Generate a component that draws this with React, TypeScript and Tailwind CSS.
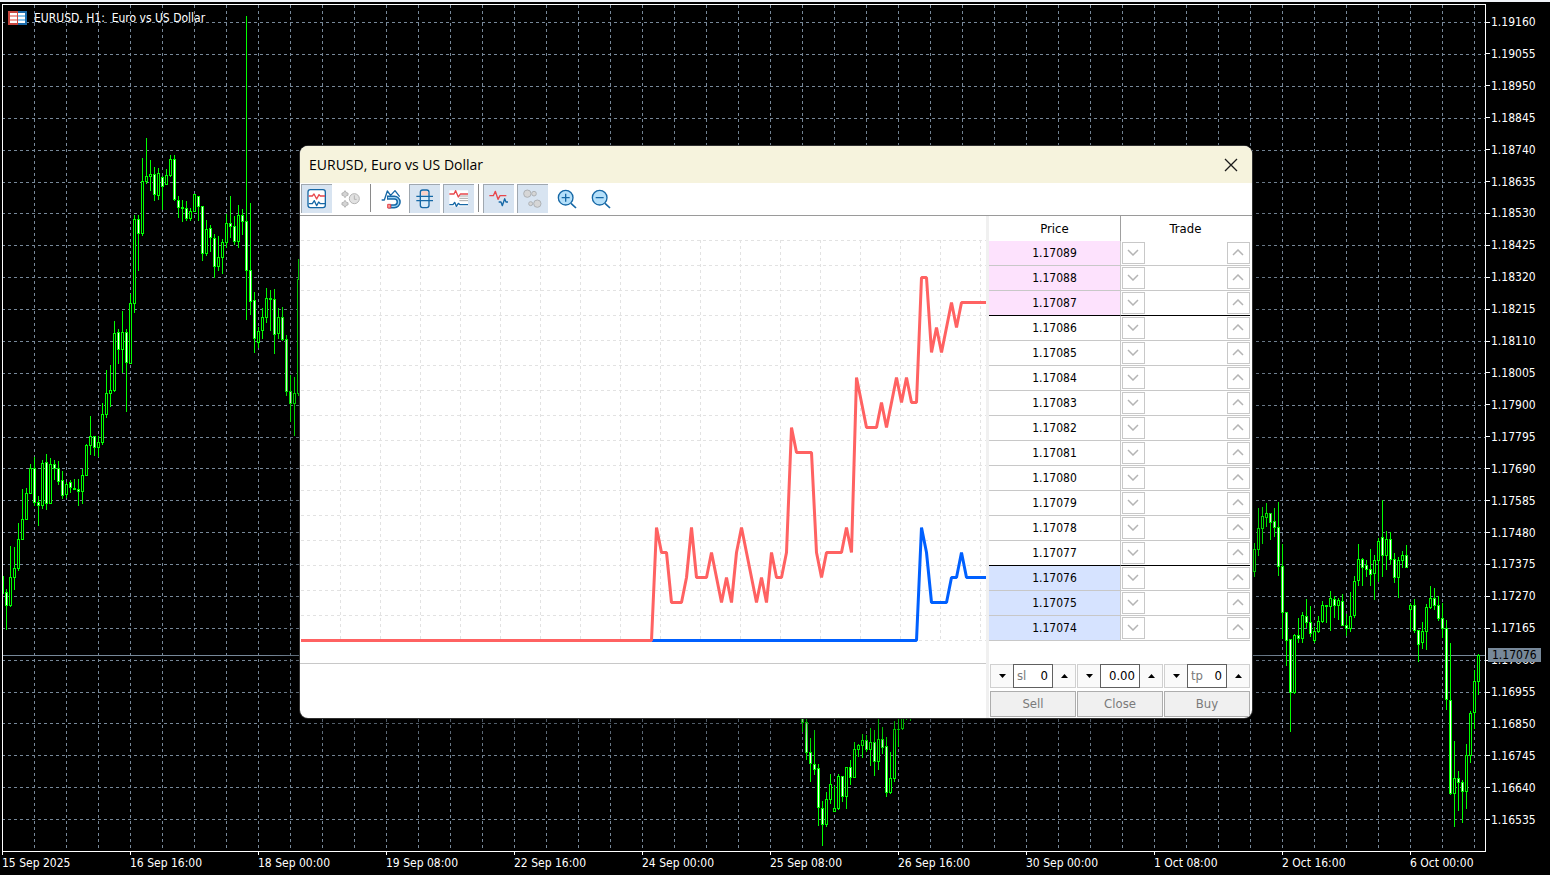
import React, { useState } from 'react';
import clsx from 'clsx';

type Candle = [high: number, top: number, bottom: number, low: number, bearish: 0 | 1];

interface CandleRun {
  start: number;
  candles: Candle[];
}

// Vertical pixel positions; one candle every 4px from the run's start
const candleRuns: CandleRun[] = [
  {
    start: 2,
    candles: [
      [576, 576, 593, 593, 0], [589, 592, 605, 630, 1], [546, 577, 605, 607, 0], [547, 568, 577, 590, 0],
      [523, 539, 568, 571, 0], [489, 519, 539, 539, 0], [488, 493, 519, 519, 0], [464, 468, 493, 493, 0],
      [457, 468, 502, 506, 1], [496, 502, 505, 526, 1], [460, 463, 505, 509, 0], [454, 462, 503, 510, 1],
      [458, 464, 503, 503, 0], [460, 464, 468, 480, 1], [461, 468, 481, 485, 1], [471, 480, 495, 499, 1],
      [482, 484, 494, 498, 0], [480, 482, 487, 493, 1], [479, 488, 489, 489, 0], [479, 489, 491, 506, 1],
      [469, 475, 491, 504, 0], [444, 445, 475, 475, 0], [416, 436, 445, 455, 0], [436, 436, 447, 456, 1],
      [436, 442, 447, 457, 0], [403, 414, 442, 445, 0], [370, 393, 414, 418, 0], [365, 390, 393, 407, 0],
      [321, 333, 390, 392, 0], [329, 332, 349, 364, 1], [311, 332, 349, 373, 0], [329, 332, 362, 412, 1],
      [294, 303, 363, 363, 0], [215, 219, 303, 313, 0], [215, 219, 233, 271, 1], [158, 181, 233, 236, 0],
      [138, 176, 181, 184, 0], [160, 174, 176, 191, 0], [167, 174, 194, 201, 1], [168, 173, 195, 200, 0],
      [176, 177, 186, 210, 1], [169, 175, 184, 184, 0], [155, 159, 175, 177, 0], [155, 159, 199, 201, 1],
      [196, 200, 207, 218, 1], [200, 207, 208, 222, 1], [201, 208, 218, 221, 1], [208, 211, 218, 221, 0],
      [194, 194, 211, 212, 0], [196, 196, 206, 221, 1], [206, 206, 253, 261, 1], [220, 229, 253, 256, 0],
      [225, 228, 237, 252, 1], [234, 238, 266, 278, 1], [236, 257, 266, 271, 0], [239, 242, 257, 274, 0],
      [214, 223, 242, 248, 0], [196, 223, 226, 238, 1], [216, 226, 241, 245, 1], [205, 215, 241, 248, 0],
      [209, 215, 221, 235, 1], [16, 221, 270, 320, 1], [203, 270, 301, 315, 1], [292, 300, 338, 353, 1],
      [327, 331, 342, 348, 0], [308, 317, 330, 339, 0], [288, 298, 317, 323, 0], [290, 298, 299, 331, 1],
      [289, 299, 334, 354, 1], [308, 317, 333, 339, 0], [307, 317, 339, 341, 1], [335, 339, 391, 396, 1],
      [375, 391, 403, 422, 1], [377, 393, 403, 436, 0], [259, 279, 393, 396, 0],
    ],
  },
  {
    start: 802,
    candles: [
      [700, 700, 722, 732, 1], [700, 722, 752, 760, 1], [738, 752, 763, 782, 1], [730, 764, 769, 775, 1],
      [764, 768, 807, 826, 1], [801, 808, 824, 846, 1], [792, 799, 824, 827, 0], [774, 784, 799, 804, 0],
      [786, 808, 811, 811, 0], [774, 776, 808, 810, 0], [776, 776, 796, 802, 1], [767, 767, 796, 809, 0],
      [760, 767, 777, 785, 1], [742, 749, 777, 778, 0], [744, 745, 749, 757, 0], [734, 740, 745, 758, 0],
      [735, 740, 749, 752, 1], [728, 742, 749, 766, 0], [730, 742, 761, 776, 1], [717, 739, 761, 770, 0],
      [727, 739, 747, 754, 1], [737, 746, 792, 797, 1], [752, 778, 792, 794, 0], [721, 729, 778, 782, 0],
      [717, 729, 729, 747, 0], [700, 700, 728, 730, 0], [700, 700, 712, 720, 0], [700, 700, 712, 721, 0],
    ],
  },
  {
    start: 1254,
    candles: [
      [543, 549, 571, 577, 0], [508, 528, 549, 556, 0], [507, 516, 528, 544, 0], [503, 513, 517, 527, 0],
      [513, 513, 522, 540, 1], [508, 521, 527, 537, 1], [502, 527, 566, 576, 1], [544, 566, 612, 639, 1],
      [612, 612, 640, 666, 1], [639, 639, 692, 732, 1], [634, 635, 692, 694, 0], [618, 635, 638, 643, 1],
      [612, 615, 638, 643, 0], [599, 616, 622, 628, 1], [606, 622, 633, 637, 1], [627, 631, 640, 643, 0],
      [616, 621, 631, 633, 0], [601, 605, 621, 623, 0], [605, 605, 606, 623, 0], [591, 598, 606, 631, 0],
      [596, 599, 605, 618, 1], [598, 600, 605, 620, 0], [594, 601, 625, 625, 1], [614, 625, 628, 636, 1],
      [592, 616, 628, 632, 0], [576, 581, 615, 618, 0], [544, 559, 580, 586, 0], [558, 559, 567, 586, 1],
      [560, 565, 569, 577, 1], [549, 569, 574, 586, 1], [555, 560, 573, 600, 0], [538, 541, 560, 582, 0],
      [500, 537, 555, 577, 1], [531, 539, 555, 570, 0], [532, 539, 559, 565, 1], [553, 559, 577, 583, 1],
      [557, 560, 577, 598, 0], [551, 555, 560, 568, 0], [545, 555, 567, 567, 1], [603, 605, 609, 630, 0],
      [599, 605, 630, 633, 1], [630, 630, 644, 662, 1], [622, 631, 642, 649, 0], [604, 607, 631, 650, 0],
      [586, 598, 607, 609, 0], [588, 598, 605, 610, 1], [596, 605, 618, 621, 1], [603, 618, 628, 638, 1],
      [620, 628, 699, 710, 1], [643, 700, 793, 795, 1], [741, 778, 793, 827, 0], [771, 778, 782, 811, 1],
      [780, 782, 791, 823, 1], [744, 755, 791, 809, 0], [711, 713, 755, 763, 0], [670, 681, 712, 729, 0],
      [654, 655, 681, 695, 0],
    ],
  },
];

const gridRows = [
  22, 54, 86, 118, 150, 182, 213, 245, 277, 309, 341, 373, 405, 437, 468, 500, 532, 564, 596, 628, 660, 692, 723,
  755, 787, 819,
];

const axisPrices = [
  '1.19160', '1.19055', '1.18950', '1.18845', '1.18740', '1.18635', '1.18530', '1.18425', '1.18320', '1.18215',
  '1.18110', '1.18005', '1.17900', '1.17795', '1.17690', '1.17585', '1.17480', '1.17375', '1.17270', '1.17165',
  '1.17060', '1.16955', '1.16850', '1.16745', '1.16640', '1.16535',
];

const axisTimes = [
  '15 Sep 2025', '16 Sep 16:00', '18 Sep 00:00', '19 Sep 08:00', '22 Sep 16:00', '24 Sep 00:00', '25 Sep 08:00',
  '26 Sep 16:00', '30 Sep 00:00', '1 Oct 08:00', '2 Oct 16:00', '6 Oct 00:00',
];

const ladder = [
  '1.17089', '1.17088', '1.17087', '1.17086', '1.17085', '1.17084', '1.17083', '1.17082', '1.17081', '1.17080',
  '1.17079', '1.17078', '1.17077', '1.17076', '1.17075', '1.17074',
];

// [tick number, height in the plot]
const askTicks: [number, number][] = [
  [0, 424], [1, 311], [2, 336], [3, 336], [4, 386], [6, 386], [7, 361], [8, 311], [9, 361], [11, 361], [12, 336],
  [14, 386], [15, 361], [16, 386], [17, 336], [18, 311], [21, 386], [22, 361], [23, 386], [24, 336], [25, 361],
  [26, 361], [27, 336], [28, 211], [29, 236], [32, 236], [33, 336], [34, 361], [35, 336], [38, 336], [39, 311],
  [40, 336], [41, 161], [43, 211], [45, 211], [46, 186], [47, 211], [49, 161], [50, 186], [51, 161], [52, 186],
  [53, 186], [54, 61], [55, 61], [56, 136], [57, 111], [58, 136], [60, 86], [61, 111], [62, 86], [67, 86],
];

const bidTicks: [number, number][] = [
  [0, 424], [53, 424], [54, 311], [55, 336], [56, 386], [59, 386], [60, 361], [61, 361], [62, 336], [63, 361],
  [67, 361],
];

const toPoints = (ticks: [number, number][]) => ticks.map(([n, y]) => `${351.5 + n * 5},${y + 0.5}`).join(' ');

const CandleChart: React.FC = () => (
  <svg className="block min-h-0 w-full flex-1" aria-label="EURUSD H1 candles">
    <g transform="translate(-3 -5)" shapeRendering="crispEdges">
      <g stroke="#778899" strokeDasharray="3 3">
        {Array.from({ length: 80 }, (_, i) => (
          <line key={i} x1={34.5 + i * 32} x2={34.5 + i * 32} y1="5" y2="2000" />
        ))}
        {gridRows.map((y) => (
          <line key={y} x1="2" x2="2600" y1={y + 0.5} y2={y + 0.5} />
        ))}
      </g>
      <line x1="3" x2="2600" y1="655.5" y2="655.5" stroke="#778899" />
      {candleRuns.map((run) =>
        run.candles.map(([high, top, bottom, low, bearish], i) => {
          const x = run.start + i * 4;
          return (
            <g key={x}>
              <rect x={x} y={high} width="1" height={Math.max(low - high, 1)} fill="#00ff00" />
              <rect x={x - 1} y={top} width="3" height={Math.max(bottom - top + 1, 1)} fill="#00ff00" />
              {bottom - top > 1 && (
                <rect x={x} y={top + 1} width="1" height={bottom - top - 1} fill={bearish ? '#ffffff' : '#000000'} />
              )}
            </g>
          );
        })
      )}
    </g>
  </svg>
);

const TickChart: React.FC = () => (
  <svg className="block h-[448px] w-full border-b border-[#c8c8c8]" aria-label="Bid and ask ticks">
    <g stroke="#e2e2e2" strokeDasharray="3 3" shapeRendering="crispEdges">
      {Array.from({ length: 17 }, (_, i) => (
        <line key={i} x1={40.5 + i * 40} x2={40.5 + i * 40} y1="24" y2="425" />
      ))}
      {Array.from({ length: 17 }, (_, i) => (
        <line key={i} x1="1" x2="686" y1={24.5 + i * 25} y2={24.5 + i * 25} />
      ))}
    </g>
    <g fill="none" strokeWidth="3" strokeLinejoin="bevel">
      <polyline points={toPoints(bidTicks)} stroke="#0060ff" />
      <polyline points={`1,424.5 ${toPoints(askTicks)}`} stroke="#ff6262" />
    </g>
  </svg>
);

// Toolbar glyphs are drawn on a 90x84 field, three units to the pixel
interface ToolButtonProps {
  label: string;
  active?: boolean;
  children: React.ReactNode;
}

const ToolButton: React.FC<ToolButtonProps> = ({ label, active, children }) => (
  <button
    type="button"
    aria-label={label}
    aria-pressed={!!active}
    className={clsx('h-[29px] w-[31px] border-t border-l', active ? 'border-[#a0a8b0] bg-[#d8e4f1]' : 'border-transparent')}
  >
    <svg viewBox="3 3 90 84" className="block h-7 w-[30px]" fill="none" strokeWidth="4" strokeLinejoin="round">
      {children}
    </svg>
  </button>
);

const RED = '#e8474c';
const BLUE = '#1668a6';
const GRAY = '#b4b4b4';

const Zoom: React.FC<{ plus?: boolean }> = ({ plus }) => (
  <g stroke={BLUE}>
    <path d="M60 58 L75 72" strokeWidth="5" />
    <circle cx="44" cy="41" r="22" fill="#b5e0fa" />
    <path d={plus ? 'M32 41 H56 M44 29 V53' : 'M32 41 H56'} />
  </g>
);

const Toolbar: React.FC = () => (
  <div className="flex h-[33px] items-start gap-[3px] border-b border-[#9a9a9a] bg-white pt-px pl-px">
    <ToolButton label="Tick chart" active>
      <rect x="21" y="17" width="52" height="54" rx="7" fill="#fff" stroke={BLUE} />
      <path d="M23 36 H34 L39 30 L47 45 L54 32 L58 36 H72" stroke={RED} />
      <path d="M23 59 H34 L40 50 L47 65 L53 54 L58 59 H72" stroke={BLUE} />
    </ToolButton>
    <ToolButton label="Time and sales">
      <g stroke={GRAY} fill="#d4d4d4" strokeWidth="3">
        <path d="M30 20 L35 27 H39 V34 H35 L30 41 L25 34 H21 V27 H25 Z" />
        <path d="M30 49 L35 56 H39 V63 H35 L30 70 L25 63 H21 V56 H25 Z" />
        <circle cx="58" cy="44" r="15" fill="#e2e2e2" />
        <path d="M58 34 V46 H65" fill="none" />
      </g>
    </ToolButton>
    <span className="mx-px h-7 w-px bg-[#8a8a8a]" />
    <ToolButton label="Magnet">
      <path d="M20 48 H28 L37 21 L47 34 L60 20 L74 38" stroke={BLUE} />
      <path d="M36 41 H58 a13 13 0 0 1 0 26 H40" stroke={BLUE} strokeWidth="13" />
      <path d="M39 41 H58 a13 13 0 0 1 0 26 H49" stroke="#9fd4f5" strokeWidth="4" />
      <rect x="38" y="61" width="9" height="11" fill="#f79a95" stroke={RED} strokeWidth="3" />
    </ToolButton>
    <ToolButton label="Price levels" active>
      <rect x="34" y="18" width="26" height="53" rx="7" fill="#d8ecfa" stroke={BLUE} />
      <path d="M37 34 V25 q0 -4 5 -4 H52 q5 0 5 4 V34 Z" fill="#fad2c8" />
      <path d="M22 37 H72 M22 50 H72" stroke={BLUE} />
    </ToolButton>
    <ToolButton label="Depth of market" active>
      <rect x="19" y="19" width="56" height="48" fill="#fff" />
      <path d="M49 36 H75 M49 43 H75 M49 50 H75" stroke="#a8a8a8" strokeWidth="3" />
      <path d="M19 30 H33 L38 20 L46 39 L52 30 H75" stroke={RED} />
      <path d="M19 62 H30 L35 55 L40 67 L46 58 L51 62 H75" stroke={BLUE} />
    </ToolButton>
    <span className="mx-px h-7 w-px bg-[#8a8a8a]" />
    <ToolButton label="Bid and ask lines" active>
      <path d="M19 35 H31 L37 22 L45 46 L51 35 H70" stroke={RED} />
      <path d="M47 54 H54 L58 65 L65 44 L69 54 H75" stroke={BLUE} />
    </ToolButton>
    <ToolButton label="Deals" active>
      <g stroke="#aeb2b6" fill="#d6d6d6" strokeWidth="3">
        <circle cx="31" cy="29" r="11" />
        <circle cx="51" cy="29" r="7" />
        <circle cx="41" cy="59" r="6" />
        <circle cx="61" cy="59" r="11" />
      </g>
    </ToolButton>
    <ToolButton label="Zoom in">
      <Zoom plus />
    </ToolButton>
    <ToolButton label="Zoom out">
      <Zoom />
    </ToolButton>
  </div>
);

const LadderButton: React.FC<{ label: string; up?: boolean }> = ({ label, up }) => (
  <button
    type="button"
    aria-label={label}
    className="flex h-[22px] w-[23px] items-center justify-center border border-[#c8c8c8] bg-white pr-px pb-px"
  >
    <svg width="12" height="7" fill="none" stroke="#b4b4b4" strokeWidth="1.5">
      <path d={up ? 'M1 6 L6 1 L11 6' : 'M1 1 L6 6 L11 1'} />
    </svg>
  </button>
);

const PriceLadder: React.FC = () => (
  <table className="w-full table-fixed border-separate border-spacing-0 text-[12px] leading-4">
    <thead>
      <tr className="h-[25px] text-[13px]">
        <th className="w-[132px] border-r border-[#a0a0a0] p-0 font-normal">Price</th>
        <th className="p-0 font-normal">Trade</th>
      </tr>
    </thead>
    <tbody>
      {ladder.map((price, i) => {
        const line = i === 2 || i === 12 ? 'border-b-black' : 'border-b-[#c8c8c8]';
        return (
          <tr key={price} className="h-[25px]">
            <td
              className={clsx(
                'border-r border-b border-r-[#c8c8c8] p-0 text-center',
                line,
                i < 3 && 'bg-[#fde2fd]',
                i > 12 && 'bg-[#d6e3ff]'
              )}
            >
              {price}
            </td>
            <td className={clsx('border-b p-0', line)}>
              <div className="flex h-6 justify-between pt-px pl-px">
                <LadderButton label={`Sell at ${price}`} />
                <LadderButton label={`Buy at ${price}`} up />
              </div>
            </td>
          </tr>
        );
      })}
    </tbody>
  </table>
);

interface StepperProps {
  name: string;
  caption?: string;
  step: number;
  digits: number;
}

const Stepper: React.FC<StepperProps> = ({ name, caption, step, digits }) => {
  const [value, setValue] = useState((0).toFixed(digits));
  const move = (delta: number) => setValue(Math.max(0, Number(value) + delta).toFixed(digits));

  return (
    <div className="flex h-6 min-w-0 flex-1">
      <button
        type="button"
        aria-label={`Decrease ${name}`}
        onClick={() => move(-step)}
        className="flex w-[23px] shrink-0 items-center justify-center border border-r-0 border-[#d0d0d0] bg-[#fafafa]"
      >
        <svg width="7" height="4"><path d="M0 0 H7 L3.5 4 Z" /></svg>
      </button>
      <label className="flex min-w-0 flex-1 items-center border border-[#606060] bg-white pr-1 pl-[3px] pb-px">
        {caption && <span className="text-[#7a7a7a]">{caption}</span>}
        <input
          aria-label={name}
          value={value}
          onChange={(e) => setValue(e.target.value)}
          className="w-0 min-w-0 flex-1 bg-transparent text-right outline-none"
        />
      </label>
      <button
        type="button"
        aria-label={`Increase ${name}`}
        onClick={() => move(step)}
        className="flex w-[23px] shrink-0 items-center justify-center border border-l-0 border-[#d0d0d0] bg-[#fafafa]"
      >
        <svg width="7" height="4"><path d="M0 4 H7 L3.5 0 Z" /></svg>
      </button>
    </div>
  );
};

const TradePanel: React.FC = () => (
  <div className="mt-[23px] pl-px text-[13px]">
    <div className="flex gap-px">
      <Stepper name="stop loss" caption="sl" step={1} digits={0} />
      <Stepper name="volume" step={0.01} digits={2} />
      <Stepper name="take profit" caption="tp" step={1} digits={0} />
    </div>
    <div className="mt-[3px] flex gap-px">
      {['Sell', 'Close', 'Buy'].map((action) => (
        <button key={action} type="button" className="h-[26px] flex-1 border border-[#adadad] bg-[#f0f0f0] text-[#7a7a7a]">
          {action}
        </button>
      ))}
    </div>
  </div>
);

const DepthWindow: React.FC = () => (
  <section
    aria-label="Depth of market"
    className="absolute top-[144px] left-[300px] w-[952px] overflow-hidden rounded-lg bg-white text-black shadow-[0_0_0_1px_#303030,0_12px_40px_rgba(0,0,0,0.5)]"
  >
    <header className="flex h-[37px] items-center justify-between bg-[#f6f3dd] pr-[14px] pl-[9px]">
      <h1 className="font-['Open_Sans','Noto_Sans',sans-serif] text-[14px]">EURUSD, Euro vs US Dollar</h1>
      <button type="button" aria-label="Close window">
        <svg width="14" height="14" stroke="#1a1a1a" strokeWidth="1.3">
          <path d="M1 1 L13 13 M13 1 L1 13" />
        </svg>
      </button>
    </header>
    <Toolbar />
    <div className="flex">
      <div className="min-w-0 flex-1">
        <TickChart />
      </div>
      <div className="w-[266px] border-l-3 border-[#f0f0f0] pr-[2px] pb-px">
        <PriceLadder />
        <TradePanel />
      </div>
    </div>
  </section>
);

const App: React.FC = () => (
  <div className="relative flex min-h-screen flex-col overflow-hidden border-t-2 border-[#f0f3f8] bg-black pt-[2px] font-['DejaVu_Sans_Condensed','DejaVu_Sans',sans-serif] text-[12px] leading-4 text-white">
    <main className="flex flex-1 pl-[2px]">
      <div className="relative flex min-w-0 flex-1 border border-white">
        <CandleChart />
        <div className="absolute top-[5px] left-[5px] flex items-center gap-[7px]">
          <svg width="19" height="14" shapeRendering="crispEdges" aria-hidden="true">
            <rect width="10" height="14" rx="1" fill="#c9473f" />
            <rect x="10" width="9" height="14" rx="1" fill="#1b6cab" />
            <path d="M2 2 H9 V4 H2 Z M2 6 H9 V8 H2 Z M2 10 H9 V12 H2 Z" fill="#fff" />
            <path d="M2 4 H9 V6 H2 Z M2 8 H9 V10 H2 Z" fill="#f0a09a" />
            <path d="M10 2 H17 V4 H10 Z M10 6 H17 V8 H10 Z M10 10 H17 V12 H10 Z" fill="#fff" />
            <path d="M10 4 H17 V6 H10 Z M10 8 H17 V10 H10 Z" fill="#8cc8ee" />
          </svg>
          <p className="whitespace-pre">EURUSD, H1:  Euro vs US Dollar</p>
        </div>
      </div>
      <div className="relative w-16 shrink-0">
        <ul className="flex h-full flex-col justify-between pt-[10px] pb-6">
          {axisPrices.map((price) => (
            <li key={price} className="flex items-center gap-px">
              <span className="h-px w-1 bg-white" />
              {price}
            </li>
          ))}
        </ul>
        <span className="absolute top-[644px] left-[2px] h-[14px] bg-[#778899] px-1 leading-[14px] text-black">1.17076</span>
      </div>
    </main>
    <footer className="flex h-[23px] shrink-0 overflow-hidden pl-[2px]">
      {axisTimes.map((time) => (
        <div key={time} className="w-32 shrink-0">
          <span className="block h-[3px] w-px bg-white" />
          {time}
        </div>
      ))}
    </footer>
    <DepthWindow />
  </div>
);

export default App;
